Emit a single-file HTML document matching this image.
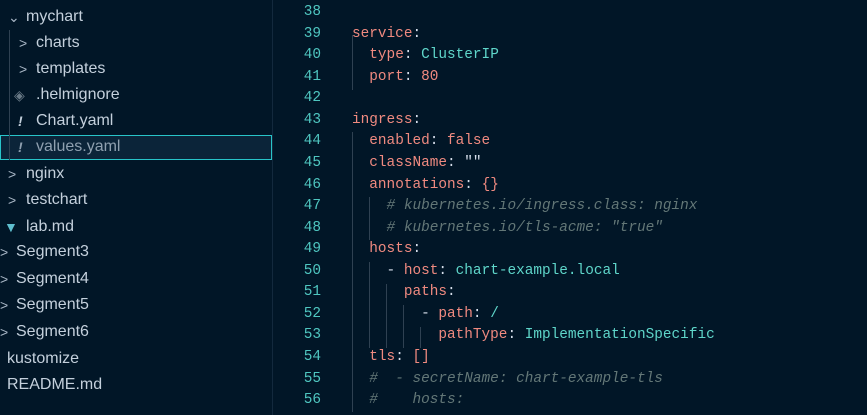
<!DOCTYPE html>
<html><head><style>
body{margin:0;width:867px;height:415px;background:#011627;overflow:hidden;position:relative;font-family:"Liberation Sans",sans-serif}
.side{position:absolute;left:0;top:0;width:272px;height:415px;border-right:1px solid #13293d}
.r{position:absolute;left:0;height:26px;line-height:26px;font-size:16px;color:#c4d0dc;white-space:nowrap}
.ch{position:absolute;color:#a9b7c6;font-size:14px}
.sel{position:absolute;left:0;top:135px;width:270px;height:23px;border:1px solid #28c4c9;background:#0b2439}
.code{position:absolute;left:0;top:2px;font-family:"Liberation Mono",monospace;font-size:14.4px}
.ln{position:absolute;left:280px;width:41px;text-align:right;color:#4fc6c0;height:21.56px;line-height:21.56px}
.tx{position:absolute;left:352px;white-space:pre;height:21.56px;line-height:21.56px;color:#d6deeb}
.k{color:#f08a80}.v{color:#5fd6ca}.c{color:#637777;font-style:italic}.p{color:#d6deeb}
.g{position:absolute;width:1px;background:#2f4152}
</style></head><body>
<div class="side">
<div class="sel"></div>
<div style="position:absolute;left:9px;top:30px;width:1px;height:130px;background:#2f4152"></div>
<div class="r" style="top:4px"><span class="ch" style="left:8px">&#8964;</span><span style="position:absolute;left:26px">mychart</span></div>
<div class="r" style="top:30px"><span class="ch" style="left:19px">&gt;</span><span style="position:absolute;left:36px">charts</span></div>
<div class="r" style="top:56px"><span class="ch" style="left:19px">&gt;</span><span style="position:absolute;left:36px">templates</span></div>
<div class="r" style="top:82px"><span class="ch" style="left:14px;color:#6b7b88">&#9672;</span><span style="position:absolute;left:36px">.helmignore</span></div>
<div class="r" style="top:108px"><span class="ch" style="left:18px;font-style:italic;font-weight:bold;color:#c4d0dc">!</span><span style="position:absolute;left:36px">Chart.yaml</span></div>
<div class="r" style="top:134px;color:#8fa0b0"><span class="ch" style="left:18px;font-style:italic;font-weight:bold;color:#8fa0b0">!</span><span style="position:absolute;left:36px">values.yaml</span></div>
<div class="r" style="top:161px"><span class="ch" style="left:8px">&gt;</span><span style="position:absolute;left:26px">nginx</span></div>
<div class="r" style="top:187px"><span class="ch" style="left:8px">&gt;</span><span style="position:absolute;left:26px">testchart</span></div>
<div class="r" style="top:214px"><span class="ch" style="left:4px;color:#5fbfcf">&#9660;</span><span style="position:absolute;left:26px">lab.md</span></div>
<div class="r" style="top:239px"><span class="ch" style="left:0">&gt;</span><span style="position:absolute;left:16px">Segment3</span></div>
<div class="r" style="top:266px"><span class="ch" style="left:0">&gt;</span><span style="position:absolute;left:16px">Segment4</span></div>
<div class="r" style="top:292px"><span class="ch" style="left:0">&gt;</span><span style="position:absolute;left:16px">Segment5</span></div>
<div class="r" style="top:319px"><span class="ch" style="left:0">&gt;</span><span style="position:absolute;left:16px">Segment6</span></div>
<div class="r" style="top:346px"><span style="position:absolute;left:7px">kustomize</span></div>
<div class="r" style="top:372px"><span style="position:absolute;left:7px">README.md</span></div>
</div>
<div class="code">
<div class="g" style="left:352px;top:33px;height:55px"></div>
<div class="g" style="left:352px;top:130px;height:280px"></div>
<div class="g" style="left:369px;top:195px;height:43px"></div>
<div class="g" style="left:369px;top:260px;height:86px"></div>
<div class="g" style="left:386px;top:282px;height:64px"></div>
<div class="g" style="left:403px;top:303px;height:43px"></div>
<div class="g" style="left:420px;top:325px;height:21px"></div>
<div class="ln" style="top:0">38</div>
<div class="ln" style="top:21.56px">39</div><div class="tx" style="top:21.56px"><span class="k">service</span>:</div>
<div class="ln" style="top:43.1px">40</div><div class="tx" style="top:43.1px">  <span class="k">type</span>: <span class="v">ClusterIP</span></div>
<div class="ln" style="top:64.7px">41</div><div class="tx" style="top:64.7px">  <span class="k">port</span>: <span class="k">80</span></div>
<div class="ln" style="top:86.2px">42</div>
<div class="ln" style="top:107.8px">43</div><div class="tx" style="top:107.8px"><span class="k">ingress</span>:</div>
<div class="ln" style="top:129.4px">44</div><div class="tx" style="top:129.4px">  <span class="k">enabled</span>: <span class="k">false</span></div>
<div class="ln" style="top:150.9px">45</div><div class="tx" style="top:150.9px">  <span class="k">className</span>: ""</div>
<div class="ln" style="top:172.5px">46</div><div class="tx" style="top:172.5px">  <span class="k">annotations</span>: <span class="k">{}</span></div>
<div class="ln" style="top:194px">47</div><div class="tx" style="top:194px">    <span class="c"># kubernetes.io/ingress.class: nginx</span></div>
<div class="ln" style="top:215.6px">48</div><div class="tx" style="top:215.6px">    <span class="c"># kubernetes.io/tls-acme: "true"</span></div>
<div class="ln" style="top:237.2px">49</div><div class="tx" style="top:237.2px">  <span class="k">hosts</span>:</div>
<div class="ln" style="top:258.7px">50</div><div class="tx" style="top:258.7px">    - <span class="k">host</span>: <span class="v">chart-example.local</span></div>
<div class="ln" style="top:280.3px">51</div><div class="tx" style="top:280.3px">      <span class="k">paths</span>:</div>
<div class="ln" style="top:301.8px">52</div><div class="tx" style="top:301.8px">        - <span class="k">path</span>: <span class="v">/</span></div>
<div class="ln" style="top:323.4px">53</div><div class="tx" style="top:323.4px">          <span class="k">pathType</span>: <span class="v">ImplementationSpecific</span></div>
<div class="ln" style="top:345px">54</div><div class="tx" style="top:345px">  <span class="k">tls</span>: <span class="k">[]</span></div>
<div class="ln" style="top:366.5px">55</div><div class="tx" style="top:366.5px">  <span class="c">#  - secretName: chart-example-tls</span></div>
<div class="ln" style="top:388.1px">56</div><div class="tx" style="top:388.1px">  <span class="c">#    hosts:</span></div>
</div>
</body></html>
